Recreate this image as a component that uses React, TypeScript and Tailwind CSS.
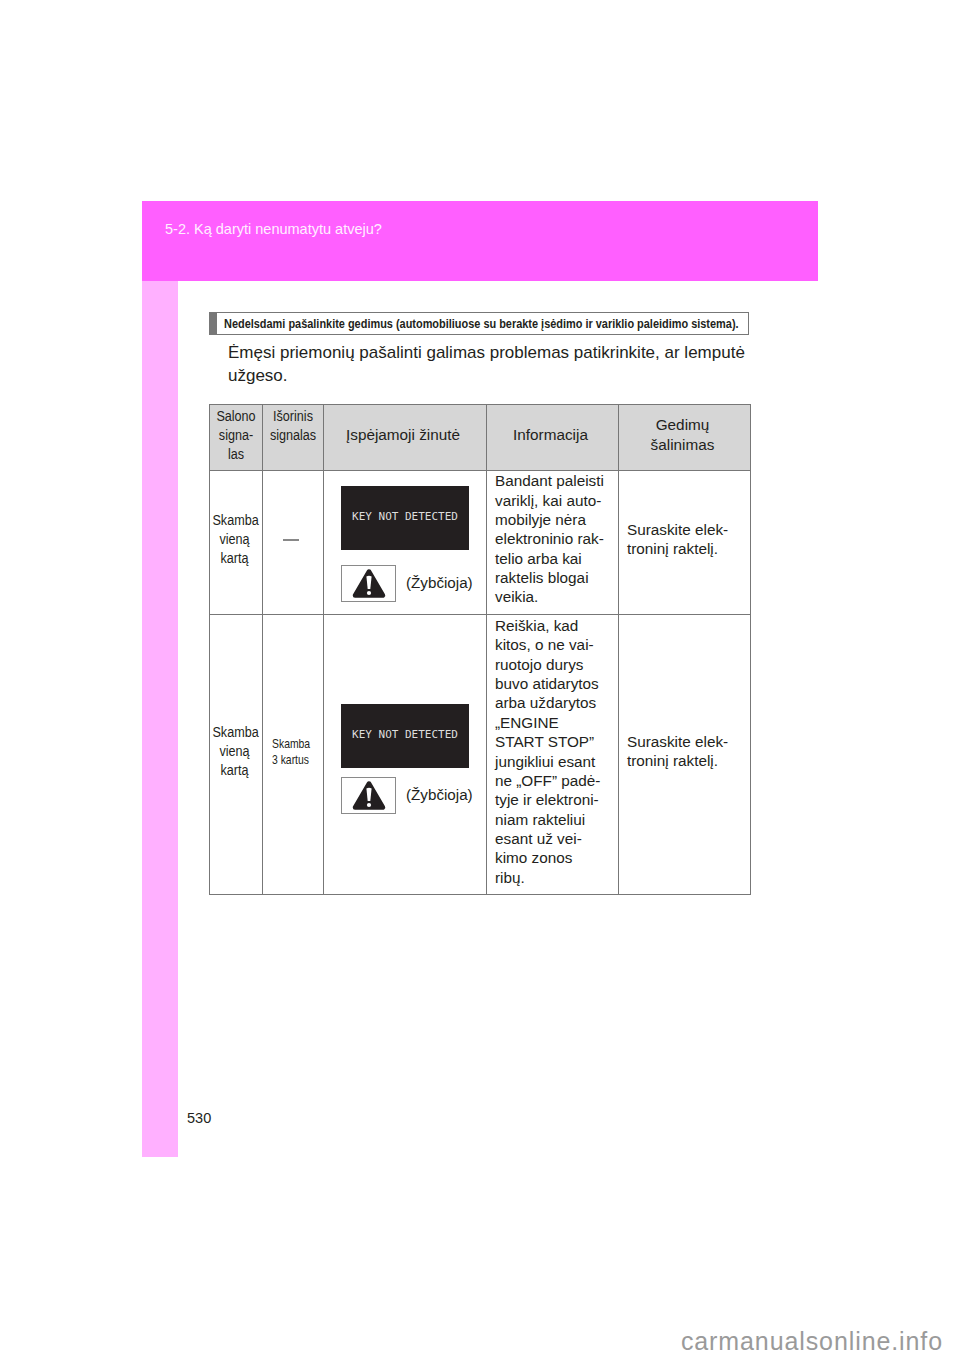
const font = { fontFamily: '"Liberation Sans", Arial, sans-serif' };

function Warn() {
  return (
    <div className="w-[55px] h-[37px] border border-[#8a8a8a] flex items-center justify-center bg-white">
      <svg width="36" height="33" viewBox="0 0 36 33">
        <path d="M18 4.5 L32 28.5 L4 28.5 Z" fill="#231f20" stroke="#231f20" strokeWidth="4.5" strokeLinejoin="round" />
        <path d="M15.4 9.5 Q18 8 20.6 9.5 L19.3 22 H16.7 Z" fill="#fff" />
        <circle cx="18" cy="26" r="2.1" fill="#fff" />
      </svg>
    </div>
  );
}

function Msg({ variant }: { variant: "a" | "b" }) {
  return (
    <div className={variant === "a" ? "flex flex-col pl-[17px] gap-[15px] pt-[2px]" : "flex flex-col pl-[17px] gap-[9px] pt-[8px]"}>
      <div className="w-[128px] h-[64px] bg-[#231f20] flex items-center justify-center text-[#dddddd] text-[11px] font-['DejaVu_Sans_Mono',monospace]">
        KEY NOT DETECTED
      </div>
      <div className="flex items-center">
        <Warn />
        <span className="ml-[10px] text-[15.2px] text-[#231f20]">(Žybčioja)</span>
      </div>
    </div>
  );
}

const sc = "text-[14px] leading-[19.3px] text-center text-[#231f20]";
const narrow = "scale-x-[0.9] whitespace-nowrap";
const b = "border border-[#777] align-middle";
const cell = "text-[15.3px] leading-[19.35px] text-[#231f20] pl-[8px]";

export default function App() {
  return (
    <div className="w-[960px] h-[1358px] bg-white relative pt-[201px] pl-[142px]" style={font}>
      <div className="w-[676px] h-[956px] flex flex-col">
        <div className="h-[80px] bg-[#ff5fff] pl-[23px] pt-[20px] text-[14.5px] leading-[16px] text-[#fff0ff]">
          5-2. Ką daryti nenumatytu atveju?
        </div>
        <div className="flex flex-1">
          <div className="w-[36px] bg-[#ffb0ff]" />
          <div className="flex-1 flex flex-col pl-[31px]">
            <div className="mt-[31px] w-[540px] h-[23px] border border-[#777] border-l-[8px] flex items-center pl-[7px] text-[12px] font-bold text-[#231f20] whitespace-nowrap">
              <span className="inline-block origin-left scale-x-[0.911]">Nedelsdami pašalinkite gedimus (automobiliuose su berakte įsėdimo ir variklio paleidimo sistema).</span>
            </div>
            <p className="mt-[6px] ml-[19px] w-[525px] text-[17px] leading-[23px] text-[#231f20]">
              Ėmęsi priemonių pašalinti galimas problemas patikrinkite, ar lemputė užgeso.
            </p>
            <table className="mt-[17px] w-[541px] border-collapse table-fixed">
              <colgroup>
                <col className="w-[53px]" />
                <col className="w-[61px]" />
                <col className="w-[163px]" />
                <col className="w-[132px]" />
                <col className="w-[132px]" />
              </colgroup>
              <tbody>
                <tr className="h-[66px] bg-[#d6d6d6] text-center text-[#231f20]">
                  <td className={`${b} ${sc} pb-[4px]`}><div className={narrow}>Salono<br />signa-<br />las</div></td>
                  <td className={`border border-[#777] align-top pt-[2px] ${sc}`}><div className={narrow}>Išorinis<br />signalas</div></td>
                  <td className={`${b} text-[15.3px] pb-[4px] pr-[4px]`}>Įspėjamoji žinutė</td>
                  <td className={`${b} text-[15.3px] pb-[4px] pr-[4px]`}>Informacija</td>
                  <td className={`${b} text-[15.3px] leading-[19.35px] pb-[6px] pr-[4px]`}>Gedimų<br />šalinimas</td>
                </tr>
                <tr className="h-[144px]">
                  <td className={`${b} ${sc} pb-[6px] pr-[3px]`}><div className={narrow}>Skamba<br />vieną<br />kartą</div></td>
                  <td className={`${b} text-center pb-[6px] pr-[4px]`}><div className="w-[16px] h-[2px] bg-[#888] mx-auto" /></td>
                  <td className={b}><Msg variant="a" /></td>
                  <td className={`${b} pb-[7px] ${cell}`}>Bandant paleisti variklį, kai auto-<br />mobilyje nėra elektroninio rak-<br />telio arba kai raktelis blogai veikia.</td>
                  <td className={`${b} pb-[7px] ${cell}`}>Suraskite elek-<br />troninį raktelį.</td>
                </tr>
                <tr className="h-[280px]">
                  <td className={`${b} ${sc} pb-[6px] pr-[3px]`}><div className={narrow}>Skamba<br />vieną<br />kartą</div></td>
                  <td className={`${b} pl-[9px] pb-[5px] text-[13px] leading-[16px] text-[#231f20]`}><div className="origin-left scale-x-[0.8] whitespace-nowrap">Skamba<br />3 kartus</div></td>
                  <td className={b}><Msg variant="b" /></td>
                  <td className={`${b} pb-[6px] ${cell}`}>Reiškia, kad<br />kitos, o ne vai-<br />ruotojo durys<br />buvo atidarytos<br />arba uždarytos<br />„ENGINE<br />START STOP”<br />jungikliui esant<br />ne „OFF” padė-<br />tyje ir elektroni-<br />niam rakteliui<br />esant už vei-<br />kimo zonos<br />ribų.</td>
                  <td className={`${b} pb-[7px] ${cell}`}>Suraskite elek-<br />troninį raktelį.</td>
                </tr>
              </tbody>
            </table>
            <div className="flex-1" />
          </div>
        </div>
      </div>
      <div className="absolute left-[187px] top-[1110px] text-[14.5px] leading-[16px] text-[#231f20]">530</div>
      <div className="absolute right-[17px] top-[1327px] text-[25px] leading-[28px] tracking-[0.9px] text-[#9a9a9a]">carmanualsonline.info</div>
    </div>
  );
}
